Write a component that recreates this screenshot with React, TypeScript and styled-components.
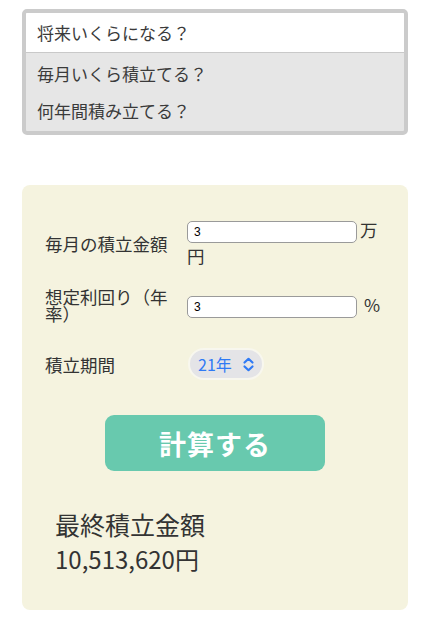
import React from "react";
import styled, { createGlobalStyle } from "styled-components";

const Global = createGlobalStyle`
  html, body { margin: 0; padding: 0; background: #ffffff; }
  body {
    font-family: "Noto Sans CJK JP", "Noto Sans", sans-serif;
    color: #333333;
    width: 430px;
  }
  * { box-sizing: border-box; }
`;

const Page = styled.div`
  padding: 9px 22px 30px;
  display: flex;
  flex-direction: column;
`;

const ListBox = styled.div`
  border: 4px solid #cbcbcb;
  border-radius: 5px;
  display: flex;
  flex-direction: column;
  background: #e6e6e6;
  padding-bottom: 2px;
  overflow: hidden;
`;

const Option = styled.div<{ $selected?: boolean }>`
  height: ${(p) => (p.$selected ? "40px" : "37px")};
  display: flex;
  align-items: center;
  padding-left: 11px;
  font-size: 17px;
  color: #3a3a3a;
  background: ${(p) => (p.$selected ? "#ffffff" : "#e6e6e6")};
  border-bottom: ${(p) => (p.$selected ? "1px solid #c9c9c9" : "none")};
  margin-bottom: ${(p) => (p.$selected ? "2px" : "0")};
`;

const Card = styled.div`
  margin-top: 50px;
  background: #f5f3df;
  border-radius: 8px;
  height: 425px;
  padding: 32px 23px 0 23px;
  display: flex;
  flex-direction: column;
`;

const Row = styled.div<{ $h: number; $mb: number }>`
  display: flex;
  align-items: center;
  min-height: ${(p) => p.$h}px;
  margin-bottom: ${(p) => p.$mb}px;
`;

const Label = styled.div`
  width: 142px;
  padding-right: 14px;
  font-size: 17.5px;
  line-height: 17px;
  color: #333;
  flex-shrink: 0;
`;

const Field = styled.div`
  width: 198px;
  font-size: 17.5px;
  line-height: 26px;
  color: #333;
`;

const Input = styled.input`
  width: 170px;
  height: 22px;
  border: 1px solid #9a9a9a;
  border-radius: 5px;
  background: #fff;
  padding: 0 6px;
  font-family: "Liberation Sans", Arial, sans-serif;
  font-size: 12px;
  color: #000;
  vertical-align: middle;
  margin: 0 3px 0 0;
  outline: none;
`;

const Pill = styled.div`
  display: inline-flex;
  align-items: center;
  gap: 10px;
  height: 32px;
  padding: 0 7px 0 8px;
  border-radius: 16px;
  background: #e4e4e7;
  border: 2px solid #f8f7ee;
  color: #2f7af5;
  font-size: 16px;
  margin-left: 1px;
`;

const ButtonWrap = styled.div`
  display: flex;
  justify-content: center;
  margin-top: 35px;
`;

const CalcButton = styled.button`
  width: 220px;
  height: 56px;
  border: none;
  border-radius: 9px;
  background: #68c9ae;
  color: #ffffff;
  font-family: "Noto Sans CJK JP", sans-serif;
  font-size: 27px;
  font-weight: 700;
  letter-spacing: 1px;
`;

const Result = styled.div`
  margin-top: 39px;
  padding-left: 10px;
  display: flex;
  flex-direction: column;
  gap: 7px;
`;

const ResultTitle = styled.div`
  font-size: 25px;
  line-height: 28px;
  color: #333;
`;

const ResultValue = styled.div`
  font-size: 24px;
  line-height: 28px;
  color: #333;
`;

const Chevron = () => (
  <svg width="13" height="15" viewBox="0 0 13 15" fill="none">
    <path d="M2.5 5.5 L6.5 1.8 L10.5 5.5" stroke="#2f7af5" strokeWidth="2.2" strokeLinecap="round" strokeLinejoin="round" />
    <path d="M2.5 9.5 L6.5 13.2 L10.5 9.5" stroke="#2f7af5" strokeWidth="2.2" strokeLinecap="round" strokeLinejoin="round" />
  </svg>
);

export default function App() {
  return (
    <>
      <Global />
      <Page>
        <ListBox>
          <Option $selected>将来いくらになる？</Option>
          <Option>毎月いくら積立てる？</Option>
          <Option>何年間積み立てる？</Option>
        </ListBox>
        <Card>
          <Row $h={52} $mb={18}>
            <Label>毎月の積立金額</Label>
            <Field>
              <Input defaultValue="3" />万円
            </Field>
          </Row>
          <Row $h={36} $mb={25}>
            <Label>想定利回り（年率）</Label>
            <Field>
              <Input defaultValue="3" /> %
            </Field>
          </Row>
          <Row $h={32} $mb={0}>
            <Label>積立期間</Label>
            <Pill>
              <span>21年</span>
              <Chevron />
            </Pill>
          </Row>
          <ButtonWrap>
            <CalcButton>計算する</CalcButton>
          </ButtonWrap>
          <Result>
            <ResultTitle>最終積立金額</ResultTitle>
            <ResultValue>10,513,620円</ResultValue>
          </Result>
        </Card>
      </Page>
    </>
  );
}
